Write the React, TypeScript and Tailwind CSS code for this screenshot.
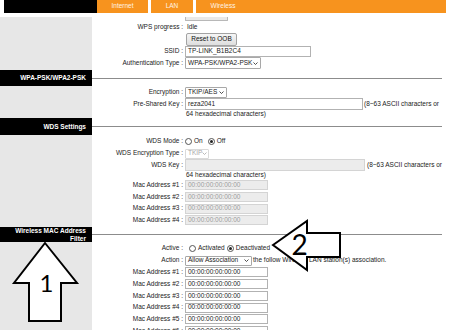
import React from 'react';

type Kids = { children?: React.ReactNode };

function Row({ h, label, children }: Kids & { h: string; label?: string }) {
  return (
    <div className={`flex ${h}`}>
      <div className="w-[92px] shrink-0 bg-[#e7e7e7]" />
      <div className="w-[93px] shrink-0 flex items-center justify-end pr-[2px] whitespace-nowrap text-[#222]">
        {label ? `${label} :` : null}
      </div>
      <div className="flex flex-1 items-center whitespace-nowrap">{children}</div>
    </div>
  );
}

function Header({ h, children }: Kids & { h: string }) {
  return (
    <div className={`flex ${h}`}>
      <div className="w-[92px] shrink-0 bg-black text-white font-bold flex items-center justify-end pr-[6px] text-right leading-[8px]">
        {children}
      </div>
      <div className="flex-1 flex items-center pr-[8px]">
        <div className="h-px w-full bg-[#8c8c8c]" />
      </div>
    </div>
  );
}

function Field({ value, className, disabled }: { value: string; className: string; disabled?: boolean }) {
  return (
    <div
      className={`flex items-center px-[2px] border ${className} ${
        disabled ? 'bg-[#ececec] border-[#d4d4d4] text-[#9c9c9c]' : 'bg-white border-[#b2b2b2] text-[#222]'
      }`}
    >
      {value}
    </div>
  );
}

function Chevron() {
  return (
    <svg width="5" height="3" viewBox="0 0 5 3" className="shrink-0">
      <polyline points="0.5,0.5 2.5,2.5 4.5,0.5" fill="none" stroke="currentColor" strokeWidth="0.8" />
    </svg>
  );
}

function Select({ value, className, disabled }: { value: string; className: string; disabled?: boolean }) {
  return (
    <div
      className={`flex items-center justify-between px-[2px] border rounded-[1px] ${className} ${
        disabled ? 'bg-white border-[#dadada] text-[#a8a8a8]' : 'bg-white border-[#a8a8a8] text-[#222]'
      }`}
    >
      <span>{value}</span>
      <Chevron />
    </div>
  );
}

function Radio({ checked }: { checked?: boolean }) {
  return (
    <span className="w-[7px] h-[7px] shrink-0 rounded-full border border-[#555] bg-white flex items-center justify-center">
      {checked && <span className="w-[3px] h-[3px] rounded-full bg-[#222]" />}
    </span>
  );
}

export default function App() {
  const wdsMacs = ['h-[12px]', 'h-[12px]', 'h-[11px]', 'h-[12px]'];
  const filterMacs = ['h-[12px]', 'h-[12px]', 'h-[12px]', 'h-[11px]', 'h-[12px]', 'h-[12px]'];

  return (
    <div className="relative w-[450px] h-[330px] overflow-hidden bg-white text-[6.5px] leading-none font-['Liberation_Sans',Arial,sans-serif]">
      {/* tab bar */}
      <div className="flex h-[13px] text-[#fff3e6]">
        <div className="w-[4px]" />
        <div className="w-[93px] bg-black" />
        <div className="w-[51px] bg-[#f7931e] flex items-center justify-center">Internet</div>
        <div className="w-[3px]" />
        <div className="w-[42px] bg-[#f7931e] flex items-center justify-center">LAN</div>
        <div className="w-[3px]" />
        <div className="w-[54px] bg-[#f7931e] flex items-center justify-center">Wireless</div>
        <div className="w-[196px] bg-[#f7931e]" />
      </div>
      <div className="h-[4px]" />

      {/* WPS */}
      <Row h="h-[5px]">
        <div className="self-start w-[43px] h-[4px] bg-[#e9e9e9] border border-t-0 border-[#b8b8b8] rounded-b-[1px]" />
      </Row>
      <Row h="h-[11px]" label="WPS progress">
        <span className="ml-[2px] text-[#222]">Idle</span>
      </Row>
      <Row h="h-[13px]">
        <div className="ml-[1px] w-[51px] h-[13px] flex items-center justify-center border border-[#a3a3a3] rounded-[2px] bg-gradient-to-b from-[#f6f6f6] to-[#dedede] text-[#111]">
          Reset to OOB
        </div>
      </Row>
      <Row h="h-[11px]" label="SSID">
        <Field value="TP-LINK_B1B2C4" className="w-[126px] h-[11px]" />
      </Row>
      <Row h="h-[12px]" label="Authentication Type">
        <Select value="WPA-PSK/WPA2-PSK" className="w-[76px] h-[12px]" />
      </Row>
      <Row h="h-[1px]" />

      <Header h="h-[16px]">WPA-PSK/WPA2-PSK</Header>
      <Row h="h-[12px]" label="Encryption">
        <Select value="TKIP/AES" className="w-[42px] h-[11px]" />
      </Row>
      <Row h="h-[12px]" label="Pre-Shared Key">
        <Field value="reza2041" className="w-[178px] h-[12px]" />
        <span className="ml-[1px] text-[#222]">(8~63 ASCII characters or</span>
      </Row>
      <Row h="h-[8px]">
        <span className="ml-[1px] text-[#222]">64 hexadecimal characters)</span>
      </Row>

      <Header h="h-[17px]">WDS Settings</Header>
      <Row h="h-[13px]" label="WDS Mode">
        <div className="flex items-center gap-[2px] text-[#222]">
          <Radio />
          <span>On</span>
          <span className="w-[1px]" />
          <Radio checked />
          <span>Off</span>
        </div>
      </Row>
      <Row h="h-[11px]" label="WDS Encryption Type">
        <Select value="TKIP" disabled className="w-[24px] h-[10px]" />
      </Row>
      <Row h="h-[12px]" label="WDS Key">
        <Field value="" disabled className="w-[180px] h-[12px]" />
        <span className="ml-[2px] text-[#222]">(8~63 ASCII characters or</span>
      </Row>
      <Row h="h-[8px]">
        <span className="ml-[1px] text-[#222]">64 hexadecimal characters)</span>
      </Row>
      {wdsMacs.map((h, i) => (
        <Row key={i} h={h} label={`Mac Address #${i + 1}`}>
          <Field value="00:00:00:00:00:00" disabled className="w-[83px] h-[10px]" />
        </Row>
      ))}
      <Row h="h-[1px]" />

      <Header h="h-[15px]">
        Wireless MAC Address
        <br />
        Filter
      </Header>
      <Row h="h-[13px]" label="Active">
        <div className="flex items-center text-[#222]">
          <span className="w-[4px]" />
          <Radio />
          <span className="ml-[2px]">Activated</span>
          <span className="ml-[2px]" />
          <Radio checked />
          <span className="ml-[2px]">Deactivated</span>
        </div>
      </Row>
      <Row h="h-[11px]" label="Action">
        <Select value="Allow Association" className="w-[67px] h-[10px]" />
        <span className="ml-[1px] text-[#222]">the follow Wireless LAN station(s) association.</span>
      </Row>
      {filterMacs.map((h, i) => (
        <Row key={i} h={h} label={`Mac Address #${i + 1}`}>
          <Field value="00:00:00:00:00:00" className="w-[83px] h-[10px]" />
        </Row>
      ))}

      {/* annotation arrows drawn over the screenshot */}
      <svg className="absolute left-0 top-0 pointer-events-none" width="450" height="330" viewBox="0 0 450 330">
        <polygon
          points="45,243 77,283 61,283 61,321 29,321 29,283 14,283"
          fill="#fff"
          stroke="#000"
          strokeWidth="2"
        />
        <text x="46.5" y="292" textAnchor="middle" fontSize="24" fontFamily="Lato, 'DejaVu Sans', sans-serif" fill="#000">
          1
        </text>
        <polygon
          points="273,245 307,221 307,233 340,233 340,257 307,257 307,270"
          fill="#fff"
          stroke="#000"
          strokeWidth="2"
        />
        <text x="299.5" y="255" textAnchor="middle" fontSize="28" fontFamily="Lato, 'DejaVu Sans', sans-serif" fill="#000">
          2
        </text>
      </svg>
    </div>
  );
}
